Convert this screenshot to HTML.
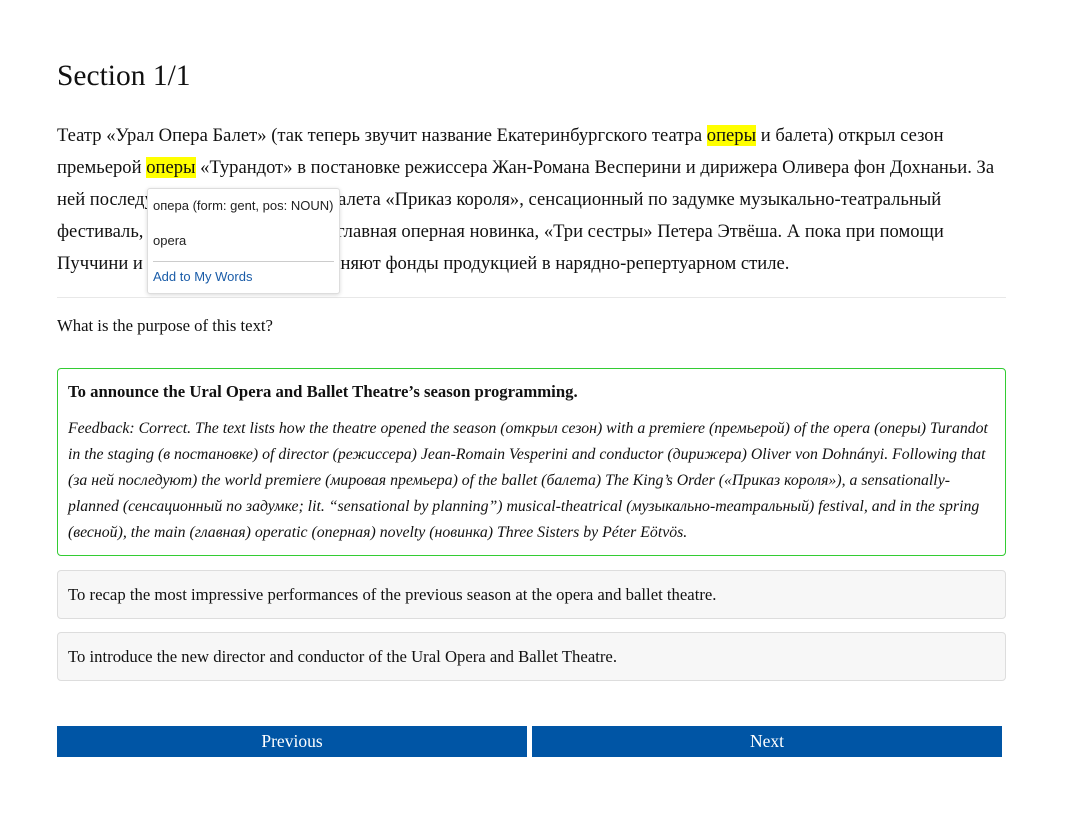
<!DOCTYPE html>
<html><head><meta charset="utf-8"><style>
body{margin:0;background:#fff;font-family:"Liberation Serif",serif;color:#111;}
.wrap{position:absolute;left:57px;top:0;width:949px;}
h1{font-weight:normal;font-size:29.5px;margin:0;position:absolute;top:60px;left:0;}
.txt{position:absolute;top:120px;left:0;width:1000px;font-size:18.6px;line-height:32px;white-space:nowrap;}
.ln{position:relative;height:32px;}
.ln span.a{position:absolute;top:0;}
.hl{background:#ff0;}
.hr{position:absolute;top:297px;left:0;width:949px;border-top:1px solid #e8e8e8;}
.q{position:absolute;top:316px;font-size:16.7px;}
.opt{position:absolute;left:0;width:947px;border:1px solid #ddd;border-radius:4px;background:#f7f7f7;font-size:16.7px;white-space:nowrap;}
.ok{border-color:#3c3;background:#fff;}
.fb{font-style:italic;font-size:15.8px;line-height:26px;margin-top:14px;}
.pop{position:absolute;left:147px;top:188px;width:191px;height:104px;background:#fff;border:1px solid #ddd;border-radius:3px;box-shadow:0 1px 4px rgba(0,0,0,.15);font-family:"Liberation Sans",sans-serif;font-size:13px;color:#222;}
.btn{position:absolute;top:726px;height:31px;width:470px;background:#0055a5;color:#fff;font-size:17.5px;text-align:center;line-height:31px;}
</style></head><body>
<div class="wrap">
<h1>Section 1/1</h1>
<div class="txt">
<div class="ln">Театр «Урал Опера Балет» (так теперь звучит название Екатеринбургского театра <span class="hl">оперы</span> и балета) открыл сезон</div>
<div class="ln">премьерой <span class="hl">оперы</span> «Турандот» в постановке режиссера Жан-Романа Весперини и дирижера Оливера фон Дохнаньи. За</div>
<div class="ln">ней последуют мировая премьера балета «Приказ короля», сенсационный по задумке музыкально-театральный</div>
<div class="ln">фестиваль, а весной — <span class="a" style="left:280px">главная оперная новинка, «Три сестры» Петера Этвёша. А пока при помощи</span></div>
<div class="ln">Пуччини и Верди <span class="a" style="left:236px">пополняют фонды продукцией в нарядно-репертуарном стиле.</span></div>
</div>
<div class="hr"></div>
<div class="q">What is the purpose of this text?</div>
<div class="opt ok" style="top:368px;height:186px;padding:0 10px;width:927px;">
<div style="font-weight:bold;margin-top:13px;">To announce the Ural Opera and Ballet Theatre’s season programming.</div>
<div class="fb">Feedback: Correct. The text lists how the theatre opened the season (открыл сезон) with a premiere (премьерой) of the opera (оперы) Turandot<br>in the staging (в постановке) of director (режиссера) Jean-Romain Vesperini and conductor (дирижера) Oliver von Dohnányi. Following that<br>(за ней последуют) the world premiere (мировая премьера) of the ballet (балета) The King’s Order («Приказ короля»), a sensationally-<br>planned (сенсационный по задумке; lit. “sensational by planning”) musical-theatrical (музыкально-театральный) festival, and in the spring<br>(весной), the main (главная) operatic (оперная) novelty (новинка) Three Sisters by Péter Eötvös.</div>
</div>
<div class="opt" style="top:570px;height:47px;line-height:47px;padding-left:10px;width:937px;">To recap the most impressive performances of the previous season at the opera and ballet theatre.</div>
<div class="opt" style="top:632px;height:47px;line-height:47px;padding-left:10px;width:937px;">To introduce the new director and conductor of the Ural Opera and Ballet Theatre.</div>
</div>
<div class="pop">
<div style="position:absolute;left:5px;top:9px;">опера (form: gent, pos: NOUN)</div>
<div style="position:absolute;left:5px;top:44px;">opera</div>
<div style="position:absolute;left:5px;right:5px;top:72px;border-top:1px solid #ccc;"></div>
<div style="position:absolute;left:5px;top:80px;color:#1a5ca8;">Add to My Words</div>
</div>
<div class="btn" style="left:57px;">Previous</div>
<div class="btn" style="left:532px;">Next</div>
</body></html>
